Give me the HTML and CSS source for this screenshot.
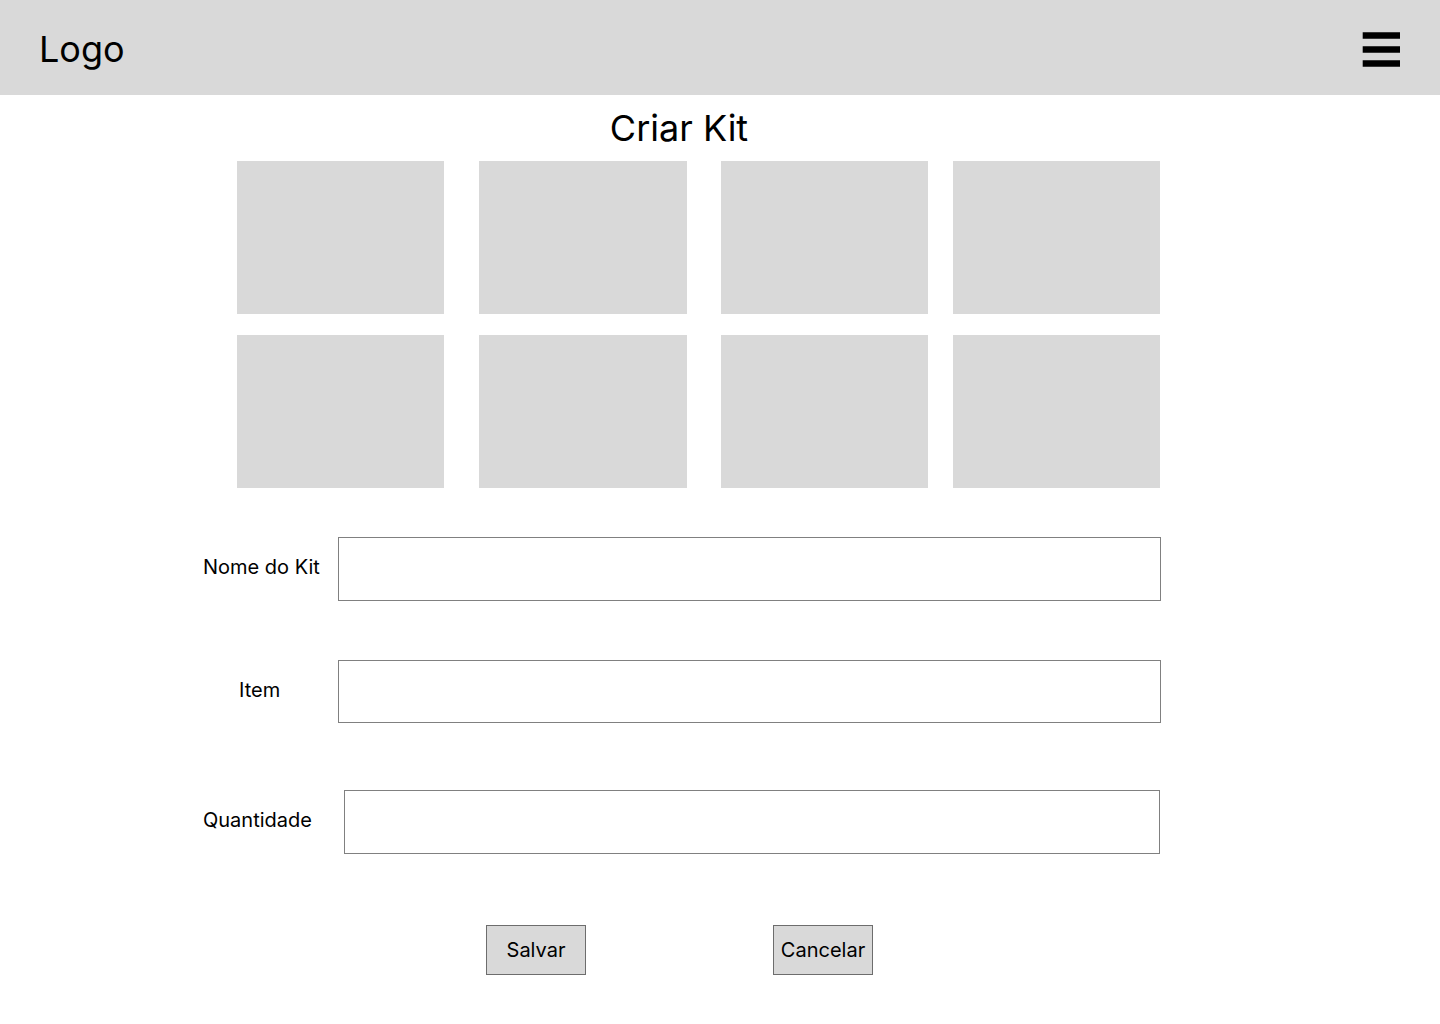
FILE: index.html
```html
<!DOCTYPE html>
<html lang="pt-BR">
<head>
<meta charset="utf-8">
<meta name="viewport" content="width=device-width, initial-scale=1">
<title>Criar Kit</title>
<link rel="stylesheet" href="styles.css">
</head>
<body>
<header class="topbar">
  <a class="logo" href="#">Logo</a>
  <button class="menu" type="button" aria-label="Menu">
    <svg viewBox="0 0 38 36" width="38" height="36" aria-hidden="true">
      <path d="M.7 1.3H38v6.4H.7zM.7 15.3H38v6.4H.7zM.7 29.3H38v6.4H.7z"/>
    </svg>
  </button>
</header>
<main class="page">
  <h1 class="title">Criar Kit</h1>
  <div class="gallery">
    <div class="tile"></div><div class="tile"></div><div class="tile"></div><div class="tile"></div>
    <div class="tile"></div><div class="tile"></div><div class="tile"></div><div class="tile"></div>
  </div>
  <form class="form">
    <div class="field">
      <label class="label" for="nome">Nome do Kit</label>
      <input class="input" id="nome" type="text">
    </div>
    <div class="field field-item">
      <label class="label" for="item">Item</label>
      <input class="input" id="item" type="text">
    </div>
    <div class="field field-quantity">
      <label class="label" for="quantidade">Quantidade</label>
      <input class="input" id="quantidade" type="text">
    </div>
    <div class="actions">
      <button class="button" type="submit">Salvar</button>
      <button class="button" type="button">Cancelar</button>
    </div>
  </form>
</main>
</body>
</html>
```
FILE: styles.css
```css
* {
  box-sizing: border-box;
}

body {
  margin: 0;
  background: #fff;
  color: #000;
  font-family: Inter, "Liberation Sans", sans-serif;
  font-size: 20px;
  line-height: 24px;
}

.topbar {
  display: flex;
  align-items: center;
  justify-content: space-between;
  padding: 27px 40px 24px 39px;
  background: #d9d9d9;
}

.logo {
  color: inherit;
  font-size: 36px;
  line-height: 44px;
  text-decoration: none;
}

.menu {
  display: flex;
  padding: 0;
  border: 0;
  background: none;
}

.page {
  padding: 11px 279px 48px 203px;
}

.title {
  margin: 0 6px 11px 0;
  font-size: 36px;
  font-weight: 400;
  line-height: 44px;
  text-align: center;
}

.gallery {
  display: grid;
  grid-template-columns: 1fr 35px 1fr 34px 1fr 25px 1fr;
  row-gap: 21px;
  padding: 0 1px 0 34px;
}

.tile {
  height: 153px;
  background: #d9d9d9;
}

.tile:nth-child(4n + 1) {
  grid-column: 1;
}

.tile:nth-child(4n + 2) {
  grid-column: 3;
}

.tile:nth-child(4n + 3) {
  grid-column: 5;
}

.tile:nth-child(4n) {
  grid-column: 7;
}

.form {
  padding-top: 49px;
}

.field {
  display: grid;
  grid-template-columns: 135px 1fr;
  align-items: center;
  margin-bottom: 59px;
}

.label {
  padding-bottom: 4px;
}

.input {
  width: 100%;
  height: 64px;
  padding: 0 16px;
  border: 1px solid #808080;
  background: #fff;
  font: inherit;
}

.field-item {
  margin-bottom: 67px;
}

.field-item .input {
  height: 63px;
}

.field-item .label {
  padding-left: 36px;
}

.field-quantity {
  grid-template-columns: 141px 1fr;
  margin-bottom: 71px;
  padding-right: 1px;
}

.actions {
  display: flex;
  justify-content: center;
  gap: 187px;
  padding-right: 5px;
}

.button {
  width: 100px;
  height: 50px;
  padding: 0;
  border: 1px solid #6d6d6d;
  background: #d9d9d9;
  color: inherit;
  font: inherit;
}
```
